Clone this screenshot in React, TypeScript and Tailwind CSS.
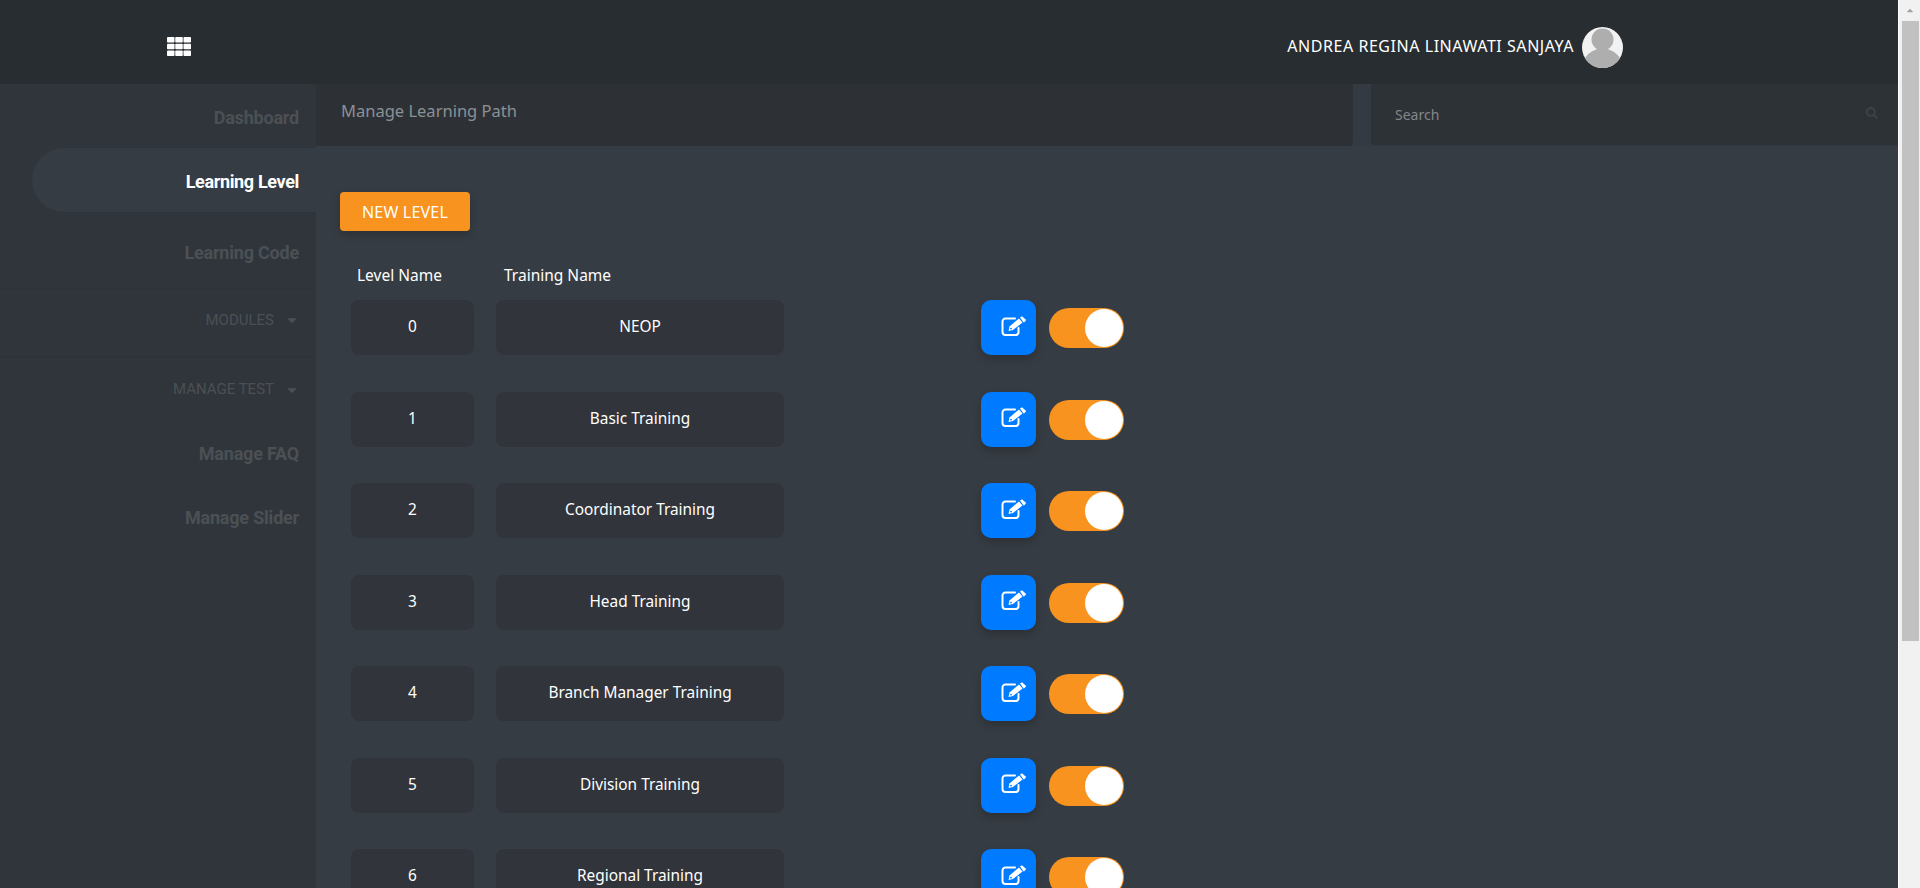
import { FaCaretDown, FaSearch } from "react-icons/fa";

const levels = [
  "NEOP",
  "Basic Training",
  "Coordinator Training",
  "Head Training",
  "Branch Manager Training",
  "Division Training",
  "Regional Training",
];

function Avatar() {
  return (
    <svg viewBox="0 0 41 41" className="h-[41px] w-[41px] shrink-0" aria-hidden>
      <clipPath id="avatar-clip">
        <circle cx="20.5" cy="20.5" r="20.5" />
      </clipPath>
      <g clipPath="url(#avatar-clip)">
        <rect width="41" height="41" fill="#f2f2f2" />
        <circle cx="20.5" cy="12.5" r="11" fill="#aeaeae" />
        <ellipse cx="20.5" cy="40" rx="20" ry="18.5" fill="#aeaeae" />
      </g>
    </svg>
  );
}

function GridIcon() {
  const cells = [0, 8.25, 16.5].flatMap((x) => [0, 6.75, 13.5].map((y) => ({ x, y })));
  return (
    <svg viewBox="0 0 24 19" className="h-[19px] w-[24px]" aria-hidden>
      {cells.map((c) => (
        <rect key={`${c.x}-${c.y}`} x={c.x} y={c.y} width="7.5" height="5.5" rx="0.8" fill="#fff" />
      ))}
    </svg>
  );
}

function EditIcon() {
  return (
    <svg viewBox="0 0 26 20" className="h-[20px] w-[26px]" aria-hidden>
      <path
        d="M14 2.5H4.5a3 3 0 0 0-3 3v10.5a3 3 0 0 0 3 3h10a3 3 0 0 0 3-3v-4"
        fill="none"
        stroke="#fff"
        strokeWidth="2"
        strokeLinecap="round"
      />
      <path d="M7.5 15l1-4.5 9.5-8 3.5 4-9.5 7.5z" fill="#fff" />
      <path d="M19 1.6l2-1.3 4.2 3.8-1.6 2-1 .3z" fill="#fff" />
      <circle cx="10" cy="12.6" r="0.9" fill="#007bff" />
    </svg>
  );
}

function Sidebar() {
  const link = "flex items-center justify-end pr-[17px] font-['Roboto',sans-serif] text-[18px] font-bold tracking-[-0.2px] text-[#4b5055]";
  const group = "flex items-center justify-end gap-[12px] pr-[18px] font-['Roboto',sans-serif] text-[15px] text-[#4b5055]";
  return (
    <aside className="w-[316px] shrink-0 bg-[#30353b]">
      <div className={`${link} h-[64px] pt-[3px]`}>Dashboard</div>
      <div className={`${link} ml-[32px] h-[64px] rounded-l-[32px] bg-[#363c43] pt-[3px] tracking-[-0.35px] text-white`}>Learning Level</div>
      <div className={`${link} h-[78px] border-b-2 border-[#2e3338] pt-[4px]`}>Learning Code</div>
      <div className={`${group} h-[68px] border-b-2 border-[#2e3338] pb-[6px]`}>
        MODULES
        <FaCaretDown className="h-[14px] w-[12px]" />
      </div>
      <div className={`${group} h-[63px]`}>
        MANAGE TEST
        <FaCaretDown className="h-[14px] w-[12px]" />
      </div>
      <div className={`${link} h-[64px]`}>Manage FAQ</div>
      <div className={`${link} h-[64px]`}>Manage Slider</div>
    </aside>
  );
}

function LevelRow({ level, name }: { level: number; name: string }) {
  return (
    <div className="flex h-[55px] shrink-0 items-stretch pl-[11px] text-[15.4px] text-white">
      <div className="flex w-[123px] items-center justify-center rounded-lg bg-[#31343b] pb-[1px]">{level}</div>
      <div className="ml-[22px] flex w-[288px] items-center justify-center rounded-lg bg-[#31343b] pb-[1px]">{name}</div>
      <button className="ml-[197px] flex w-[55px] items-center justify-center rounded-[10px] bg-[#007bff] pb-[4px] pl-[11px] text-white shadow-[0_4px_8px_rgba(0,0,0,0.2)]">
        <EditIcon />
      </button>
      <div className="ml-[13px] mt-[8px] flex h-[40px] w-[75px] items-center justify-end rounded-full bg-[#f7931e] pr-px">
        <span className="h-[38px] w-[38px] rounded-full bg-white" />
      </div>
    </div>
  );
}

export default function App() {
  return (
    <div className="flex h-screen overflow-hidden bg-[#363c43] font-['Noto_Sans',sans-serif]">
      <div className="flex min-w-0 flex-1 flex-col">
        <header className="flex h-[84px] shrink-0 items-center justify-between bg-[#282d31] pl-[167px] pr-[275px] pt-[11px]">
          <div className="mb-[3px] flex">
            <GridIcon />
          </div>
          <div className="flex items-center gap-[8px] text-[16px] tracking-[0.55px] text-white">
            <span className="mb-[3px]">ANDREA REGINA LINAWATI SANJAYA</span>
            <Avatar />
          </div>
        </header>
        <div className="flex min-h-0 flex-1">
          <Sidebar />
          <main className="min-w-0 flex-1">
            <div className="flex h-[62px] gap-[18px] bg-[#343a41]">
              <div className="flex w-[1037px] rounded-br-sm bg-[#2d3135] pl-[25px] pt-[15px] text-[16.5px] text-[#8b9096]">
                Manage Learning Path
              </div>
              <div className="mb-px flex flex-1 items-center justify-between rounded-bl-sm bg-[#2d3236] pl-[24px] pr-[20px] text-[14px] text-[#83878c]">
                Search
                <FaSearch className="mb-[3px] h-[12px] w-[12px] text-[#3d4247]" />
              </div>
            </div>
            <div className="flex flex-col pl-[24px] pt-[46px]">
              <button className="h-[39px] w-[130px] rounded bg-[#f7931e] text-[16px] tracking-[0.2px] text-white shadow-[0_4px_8px_rgba(0,0,0,0.2)]">
                NEW LEVEL
              </button>
              <div className="mb-[14px] mt-[35px] flex h-[20px] items-center text-[15.5px] text-white">
                <span className="ml-[17px] w-[147px]">Level Name</span>
                <span>Training Name</span>
              </div>
              <div className="flex flex-col gap-[36.5px]">
                {levels.map((name, index) => (
                  <LevelRow key={name} level={index} name={name} />
                ))}
              </div>
            </div>
          </main>
        </div>
      </div>
      <div className="flex w-[22px] shrink-0 flex-col items-center border-l border-white bg-[#f1f1f1] pl-px">
        <FaCaretDown className="mt-[6px] h-[10px] w-[12px] rotate-180 text-[#a3a3a3]" />
        <div className="mt-[5px] h-[620px] w-[17px] bg-[#c1c1c1]" />
      </div>
    </div>
  );
}
